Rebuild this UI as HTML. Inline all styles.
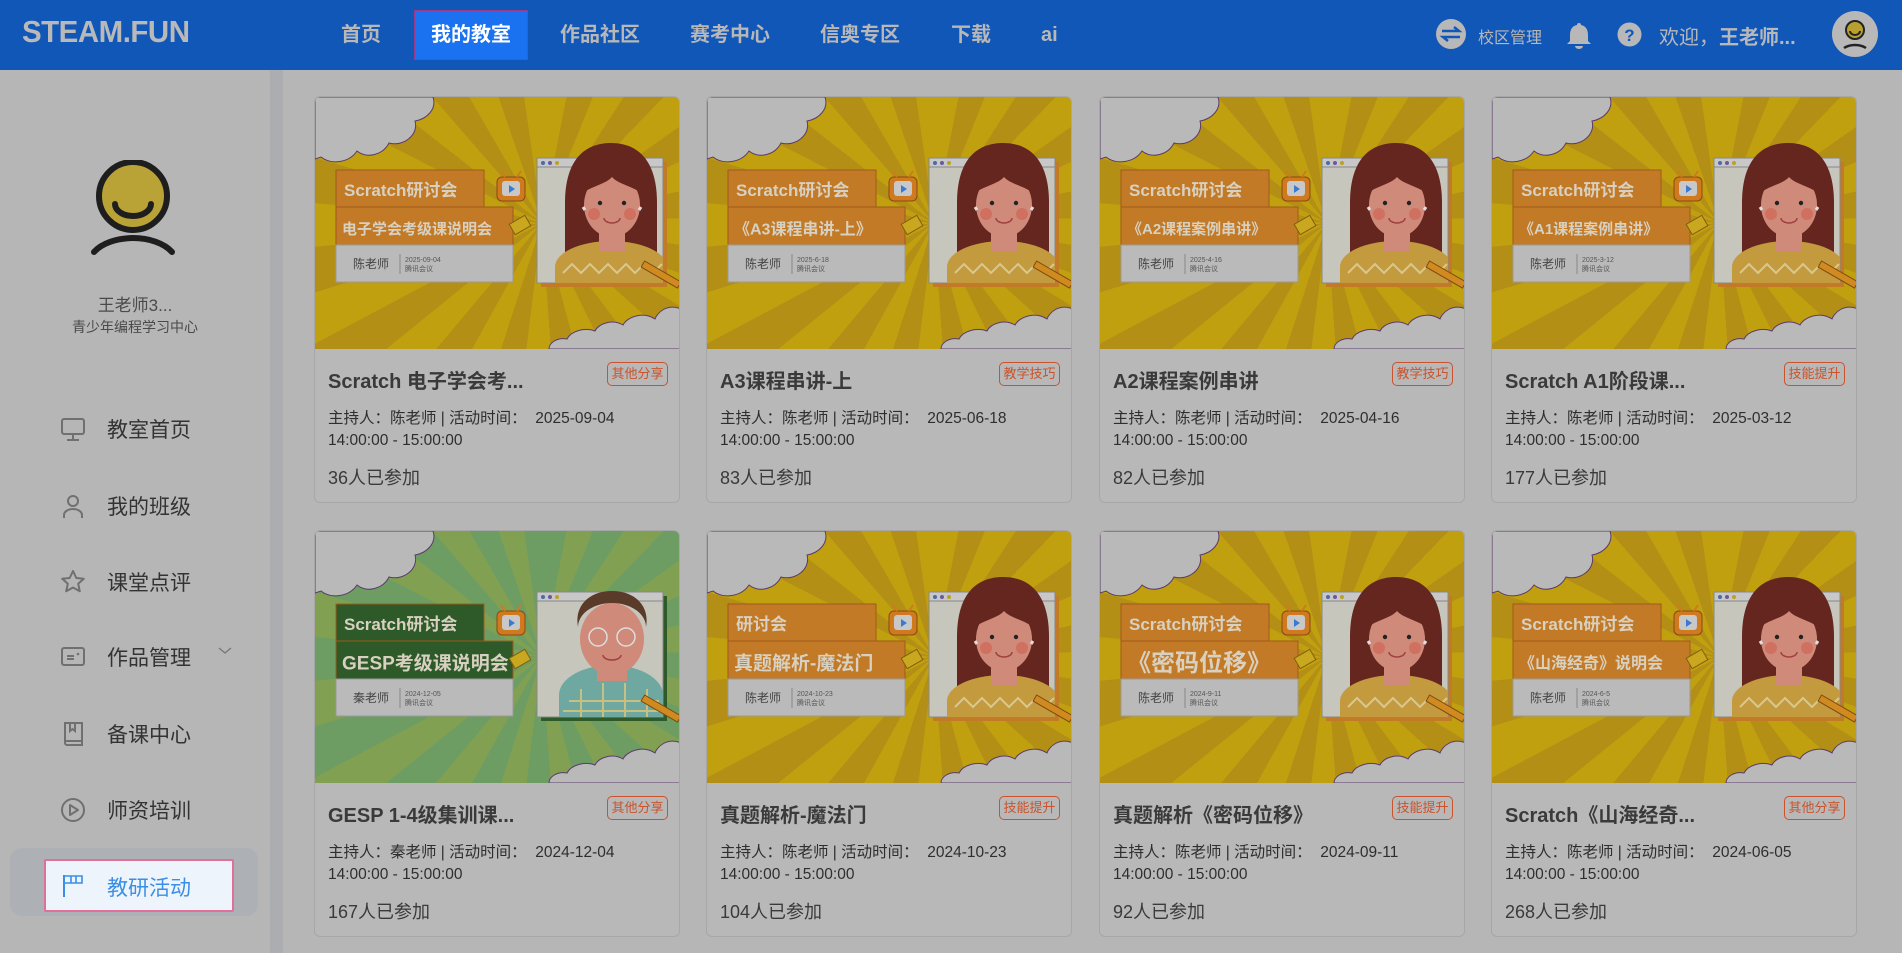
<!DOCTYPE html>
<html><head><meta charset="utf-8"><style>
*{margin:0;padding:0;box-sizing:border-box}
body{width:1902px;height:953px;overflow:hidden;background:#b6b6b6;font-family:"Liberation Sans","Noto Sans CJK SC",sans-serif;position:relative}
.hd{position:absolute;left:0;top:0;width:1902px;height:70px;background:#1157b8}
.logo{position:absolute;left:22px;top:14px;font-size:31px;font-weight:bold;color:#b9b9b9;letter-spacing:-0.5px;transform:scaleX(0.95);transform-origin:left}
.nav{position:absolute;top:22px;height:26px;line-height:26px;font-size:20px;font-weight:bold;color:#b8b8b8}
.act{position:absolute;left:414px;top:10px;width:114px;height:50px;background:#1a72f0;border:1px solid #9a3a8a;color:#fff;font-size:20px;font-weight:bold;text-align:center;line-height:48px}
.sb{position:absolute;left:0;top:70px;width:270px;height:883px;background:#b6b6b6}
.strip{position:absolute;left:270px;top:70px;width:13px;height:883px;background:#abadb1}
.mi{position:absolute;left:0;width:270px;height:40px;font-size:21px;color:#333}
.mi svg{position:absolute;left:60px;top:8px}
.mi span{position:absolute;left:107px;top:6px}
.card{position:absolute;width:366px;height:407px;background:#b8b8b8;border:1px solid #a7a7a7;border-radius:6px;overflow:hidden}
.img{position:absolute;left:0;top:0;width:366px;height:252px}
.y{background:repeating-conic-gradient(from 0deg at 62% 50%,#c1a010 0 11deg,#b48f16 11deg 22deg)}
.g{background:repeating-conic-gradient(from 0deg at 62% 50%,#6d9d63 0 11deg,#82a052 11deg 22deg)}
.t{position:absolute;left:13px;top:268px;font-size:20px;font-weight:bold;color:#3a3a3a}
.tag{position:absolute;left:292px;top:265px;width:61px;height:24px;border:1px solid #c9532c;border-radius:5px;color:#c9532c;font-size:13px;text-align:center;line-height:22px}
.h{position:absolute;left:13px;top:311px;font-size:15.5px;color:#2e2e2e;line-height:22px}
.p{position:absolute;left:13px;top:367px;font-size:18px;color:#3a3a3a}
</style></head><body>
<div class="hd">
<div class="logo">STEAM.FUN</div>
<div class="nav" style="left:341px">首页</div>
<div class="act">我的教室</div>
<div class="nav" style="left:560px">作品社区</div>
<div class="nav" style="left:690px">赛考中心</div>
<div class="nav" style="left:820px">信奥专区</div>
<div class="nav" style="left:951px">下载</div>
<div class="nav" style="left:1041px">ai</div>
<svg style="position:absolute;left:1435px;top:18px" width="32" height="32"><circle cx="16" cy="16" r="15" fill="#b8b8b8"/><path d="M7 13h17l-5-4M25 19H8l5 4" stroke="#1157b8" stroke-width="2.5" fill="none"/></svg>
<div style="position:absolute;left:1478px;top:24px;font-size:16px;color:#b8b8b8">校区管理</div>
<svg style="position:absolute;left:1565px;top:20px" width="28" height="30"><path d="M14 3a2 2 0 0 1 2 2c5 1 7 5 7 10v6l3 3H2l3-3v-6c0-5 2-9 7-10a2 2 0 0 1 2-2z" fill="#b8b8b8"/><path d="M10 26a4 3 0 0 0 8 0z" fill="#b8b8b8"/></svg>
<svg style="position:absolute;left:1617px;top:22px" width="25" height="25"><circle cx="12.5" cy="12.5" r="12" fill="#b8b8b8"/><text x="12.5" y="19" text-anchor="middle" font-size="17" font-weight="bold" fill="#1157b8" font-family="Liberation Sans">?</text></svg>
<div style="position:absolute;left:1659px;top:21px;font-size:20px;color:#b8b8b8">欢迎，<b>王老师...</b></div>
<svg style="position:absolute;left:1832px;top:11px" width="46" height="46"><circle cx="23" cy="23" r="23" fill="#b8b8b8"/><circle cx="23" cy="19" r="9" fill="#b8a030" stroke="#222" stroke-width="2"/><path d="M18 20a5 4 0 0 0 10 0" stroke="#222" stroke-width="2" fill="none"/><path d="M12 37a14 8 0 0 1 22 0" stroke="#222" stroke-width="2.5" fill="none"/></svg>
</div>
<div class="sb">
<svg style="position:absolute;left:90px;top:90px" width="86" height="96"><circle cx="43" cy="36" r="34" fill="#b9a236" stroke="#1e1e1e" stroke-width="6"/><path d="M25 44a18 12 0 0 0 36 0" stroke="#1e1e1e" stroke-width="6" fill="none" stroke-linecap="round"/><path d="M4 92a44 26 0 0 1 78 0" stroke="#1e1e1e" stroke-width="6" fill="none" stroke-linecap="round"/></svg>
<div style="position:absolute;left:0;width:270px;text-align:center;top:221px;font-size:17px;color:#4a4a4a">王老师3...</div>
<div style="position:absolute;left:0;width:270px;text-align:center;top:247px;font-size:14px;color:#4a4a4a">青少年编程学习中心</div>
</div>
<div class="strip"></div>
<div class="mi" style="top:408px"><svg width="26" height="26"><rect x="2" y="3" width="22" height="15" rx="2" stroke="#707070" stroke-width="2" fill="none"/><path d="M13 18v5M7 24h12" stroke="#707070" stroke-width="2"/></svg><span>教室首页</span></div>
<div class="mi" style="top:485px"><svg width="26" height="26"><circle cx="13" cy="8" r="5" stroke="#707070" stroke-width="2" fill="none"/><path d="M4 25v-3a9 6 0 0 1 18 0v3" stroke="#707070" stroke-width="2" fill="none"/></svg><span>我的班级</span></div>
<div class="mi" style="top:561px"><svg width="26" height="26"><path d="M13 2l3.3 7 7.5.8-5.6 5 1.6 7.5L13 18.5 6.2 22.3l1.6-7.5-5.6-5 7.5-.8z" stroke="#707070" stroke-width="2" fill="none" stroke-linejoin="round"/></svg><span>课堂点评</span></div>
<div class="mi" style="top:636px"><svg width="26" height="26"><rect x="2" y="4" width="22" height="17" rx="2" stroke="#707070" stroke-width="2" fill="none"/><path d="M7 12h7M7 15h7" stroke="#707070" stroke-width="2"/><circle cx="18" cy="10" r="1.3" fill="#707070"/></svg><span>作品管理</span><svg style="left:218px;top:10px" width="14" height="10"><path d="M1 2l6 5 6-5" stroke="#777" stroke-width="1.3" fill="none"/></svg></div>
<div class="mi" style="top:713px"><svg width="26" height="26"><path d="M5 2h17v22H7a2 2 0 0 1-2-2z M5 20h17" stroke="#707070" stroke-width="2" fill="none"/><path d="M10 2v8l2.5-2 2.5 2V2" stroke="#707070" stroke-width="2" fill="none"/></svg><span>备课中心</span></div>
<div class="mi" style="top:789px"><svg width="26" height="26"><circle cx="13" cy="13" r="11" stroke="#707070" stroke-width="2" fill="none"/><path d="M10 8v10l8-5z" stroke="#707070" stroke-width="2" fill="none" stroke-linejoin="round"/></svg><span>师资培训</span></div>
<div style="position:absolute;left:10px;top:848px;width:248px;height:68px;background:#adb0b5;border-radius:12px"></div>
<div style="position:absolute;left:44px;top:859px;width:190px;height:53px;background:#eef4fb;border:2px solid #e0709a;border-radius:2px"></div>
<svg style="position:absolute;left:62px;top:873px" width="26" height="26"><path d="M2 2v22" stroke="#3a8ee6" stroke-width="2"/><path d="M3 3h17v7H3M9 3v7M14 3v7" stroke="#3a8ee6" stroke-width="1.6" fill="none"/></svg>
<div style="position:absolute;left:107px;top:872px;font-size:21px;color:#3a8ee6">教研活动</div>

<div id="cards"></div>
<script>
var data=[
[314,96,'y','#c27a26','Scratch研讨会','电子学会考级课说明会',15,'陈老师','2025-09-04','Scratch 电子学会考...','其他分享','陈老师','2025-09-04','36'],
[706,96,'y','#c27a26','Scratch研讨会','《A3课程串讲-上》',16,'陈老师','2025-6-18','A3课程串讲-上','教学技巧','陈老师','2025-06-18','83'],
[1099,96,'y','#c27a26','Scratch研讨会','《A2课程案例串讲》',15,'陈老师','2025-4-16','A2课程案例串讲','教学技巧','陈老师','2025-04-16','82'],
[1491,96,'y','#c27a26','Scratch研讨会','《A1课程案例串讲》',15,'陈老师','2025-3-12','Scratch A1阶段课...','技能提升','陈老师','2025-03-12','177'],
[314,530,'g','#2e5a29','Scratch研讨会','GESP考级课说明会',19,'秦老师','2024-12-05','GESP 1-4级集训课...','其他分享','秦老师','2024-12-04','167'],
[706,530,'y','#c27a26','研讨会','真题解析-魔法门',19,'陈老师','2024-10-23','真题解析-魔法门','技能提升','陈老师','2024-10-23','104'],
[1099,530,'y','#c27a26','Scratch研讨会','《密码位移》',24,'陈老师','2024-9-11','真题解析《密码位移》','技能提升','陈老师','2024-09-11','92'],
[1491,530,'y','#c27a26','Scratch研讨会','《山海经奇》说明会',16,'陈老师','2024-6-5','Scratch《山海经奇...','其他分享','陈老师','2024-06-05','268']];
var h='';
data.forEach(function(d,i){
var boy=(d[2]=='g');
var person=boy?
'<path d="M244 186v-22a42 24 0 0 1 104 0v22z" fill="#6fa8a0"/><path d="M254 170h90M248 180h100M266 158v28M288 152v34M310 152v34M332 158v28" stroke="#c8c080" stroke-width="2"/><rect x="282" y="126" width="30" height="24" fill="#cf8a7a"/><ellipse cx="297" cy="108" rx="32" ry="36" fill="#cf8a7a"/><path d="M263 96a34 24 0 0 1 68 0c4-22-12-36-34-36s-38 14-34 36z" fill="#5a3a28"/><circle cx="283" cy="106" r="9" stroke="#ddd" stroke-width="1.5" fill="none"/><circle cx="311" cy="106" r="9" stroke="#ddd" stroke-width="1.5" fill="none"/><path d="M288 124a9 5 0 0 0 18 0" stroke="#a04040" stroke-width="1.5" fill="none"/>'
:
'<path d="M250 106c0-46 22-60 46-60s46 14 46 60v68h-92z" fill="#65261f"/><path d="M240 186v-16a56 26 0 0 1 112 0v16z" fill="#c49a3e"/><path d="M248 176l9-9 9 9 9-9 9 9 9-9 9 9 9-9 9 9 9-9 9 9 9-9" stroke="#d8c890" stroke-width="2" fill="none"/><rect x="284" y="128" width="26" height="26" fill="#cf8a7a"/><ellipse cx="297" cy="108" rx="28" ry="32" fill="#cf8a7a"/><path d="M268 96c0-20 12-30 29-30s29 10 29 30c-9-7-23-9-29-16-6 7-20 9-29 16z" fill="#65261f"/><circle cx="285" cy="106" r="2.2" fill="#222"/><circle cx="309" cy="106" r="2.2" fill="#222"/><circle cx="279" cy="117" r="6" fill="#d07060"/><circle cx="315" cy="117" r="6" fill="#d07060"/><path d="M289 121a8 5 0 0 0 16 0" stroke="#a04040" stroke-width="1.5" fill="none"/><path d="M268 110l2 3M326 110l-2 3" stroke="#ddd" stroke-width="3"/>';
h+='<div class="card" style="left:'+d[0]+'px;top:'+d[1]+'px"><div class="img '+d[2]+'"></div>'+
'<svg style="position:absolute;left:0;top:0" width="366" height="252" font-family="Liberation Sans,Noto Sans CJK SC,sans-serif">'+
'<path d="M0 0h118c4 12-6 22-18 24 4 14-12 26-26 22-6 12-22 16-32 8-8 12-26 14-36 6L0 62z" fill="#b9b9b9" stroke="#5a3a6a" stroke-width="1"/>'+
'<path d="M366 212c-14-6-24 4-26 10-12-8-28-2-32 6-10-6-24-2-28 6-10-4-24 0-28 8-10-2-18 4-18 10h132z" fill="#b9b9b9" stroke="#5a3a6a" stroke-width="1"/>'+
'<rect x="21" y="73" width="148" height="37" fill="'+d[3]+'" stroke="#a05a18"/>'+
'<text x="29" y="99" font-size="17" font-weight="bold" fill="#d8d0c0">'+d[4]+'</text>'+
'<rect x="21" y="110" width="177" height="38" fill="'+d[3]+'" stroke="#a05a18"/>'+
'<text x="27" y="'+(132+d[6]/3)+'" font-size="'+d[6]+'" font-weight="bold" fill="#d8d0c0">'+d[5]+'</text>'+
'<rect x="21" y="148" width="177" height="37" fill="#bababa" stroke="#999"/>'+
'<text x="38" y="171" font-size="12" fill="#444">'+d[7]+'</text><path d="M85 157v20" stroke="#888"/>'+
'<text x="90" y="165" font-size="7" fill="#555">'+d[8]+'</text><text x="90" y="174" font-size="7" fill="#555">腾讯会议</text>'+
'<rect x="182" y="80" width="28" height="24" rx="5" fill="#d07a20" stroke="#8a4a10"/><rect x="187" y="84" width="18" height="15" rx="3" fill="#c8c8c8"/><path d="M194 88v8l6-4z" fill="#3a7ad0"/><path d="M190 80l-4-6M202 80l4-6" stroke="#d07a20" stroke-width="2"/>'+
'<rect x="196" y="122" width="18" height="12" fill="#c9a820" stroke="#806010" transform="rotate(-30 205 128)"/>'+
'<rect x="226" y="65" width="126" height="125" fill="'+(boy?'#2e5a29':'#c27a26')+'"/>'+
'<rect x="222" y="61" width="126" height="125" fill="#c6c6bc" stroke="#888"/><rect x="222" y="61" width="126" height="9" fill="#c8c8c8" stroke="#888"/>'+
'<svg x="0" y="0" width="348" height="186" viewBox="0 0 348 186" overflow="hidden">'+person+'</svg>'+
'<circle cx="228" cy="66" r="2" fill="#4a6aaa"/><circle cx="235" cy="66" r="2" fill="#6a5a9a"/><circle cx="242" cy="66" r="2" fill="#c0a020"/>'+
'<rect x="328" y="170" width="42" height="7" fill="#d08a20" stroke="#7a4a10" transform="rotate(30 340 170)"/>'+
'</svg>'+
'<div class="t">'+d[9]+'</div><div class="tag">'+d[10]+'</div>'+
'<div class="h">主持人：'+d[11]+' | 活动时间：&nbsp; '+d[12]+'<br>14:00:00 - 15:00:00</div>'+
'<div class="p">'+d[13]+'人已参加</div></div>';
});
document.getElementById('cards').innerHTML=h;
</script>
</body></html>
